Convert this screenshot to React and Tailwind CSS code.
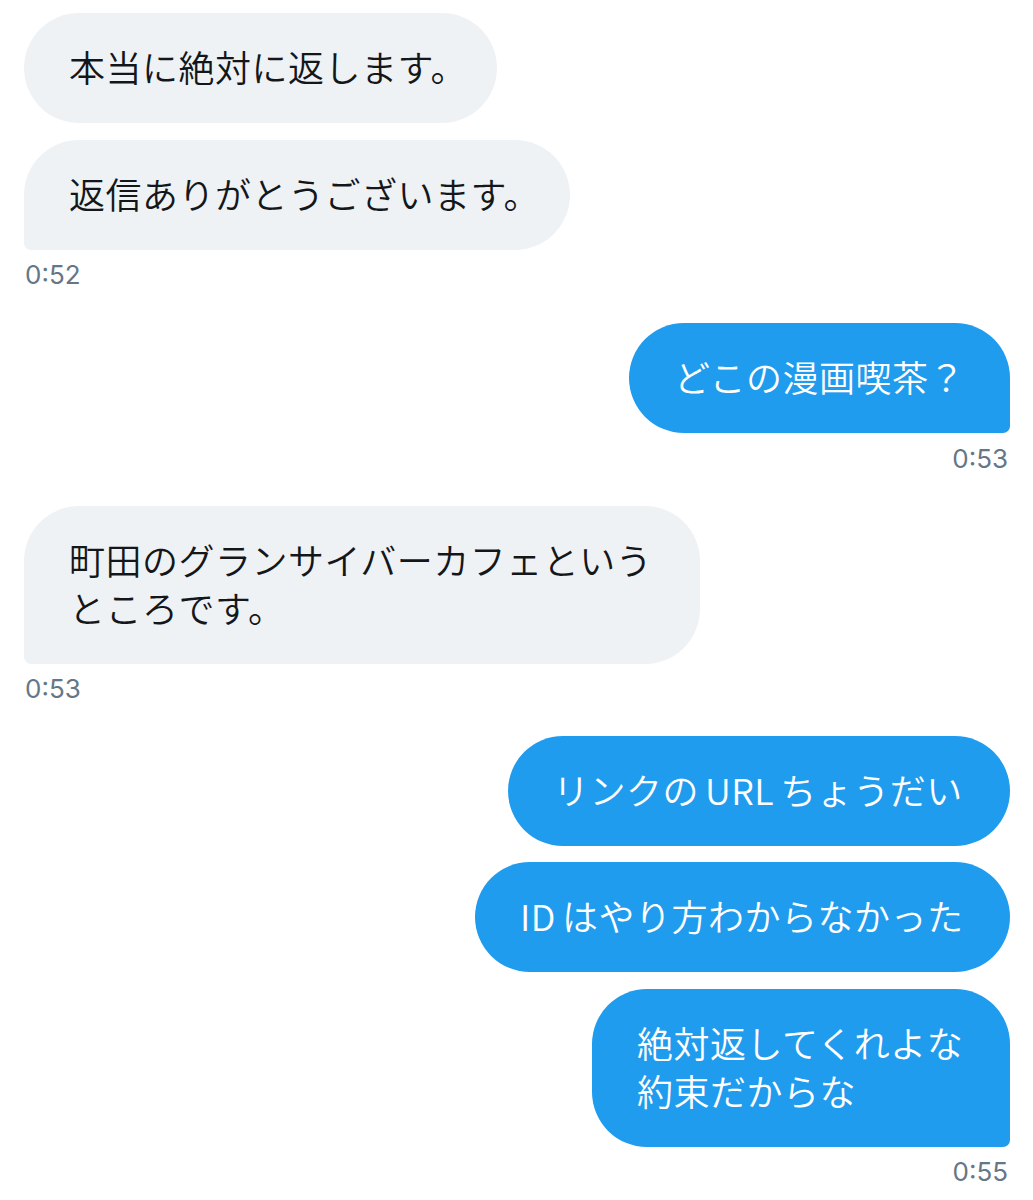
import React from "react";

const jp = { fontFamily: '"Noto Sans CJK JP", "Noto Sans", sans-serif' };
const ts = { fontFamily: 'Inter, "Liberation Sans", sans-serif' };

function Bubble({ side, width, tail, lines, className = "" }) {
  const base =
    side === "left"
      ? "self-start bg-[#eff2f5] text-[#14171a]"
      : "self-end bg-[#209cee] text-white";
  const corner = tail
    ? side === "left"
      ? "rounded-tl-[55px] rounded-tr-[55px] rounded-br-[55px] rounded-bl-[7px]"
      : "rounded-tl-[55px] rounded-tr-[55px] rounded-bl-[55px] rounded-br-[7px]"
    : "rounded-[55px]";
  return (
    <div
      className={`${base} ${corner} ${className} pt-[29px] pb-[33px] pl-[45px] text-[36px] leading-[48px] tracking-[0.5px] font-[350] whitespace-nowrap`}
      style={{ ...jp, width }}
    >
      {lines.map((l, i) => (
        <div key={i}>{l}</div>
      ))}
    </div>
  );
}

function Time({ side, children, className = "" }) {
  return (
    <div
      className={`${side === "left" ? "self-start pl-[1px]" : "self-end pr-[2px]"} ${className} text-[26px] leading-[32px] text-[#657786]`}
      style={ts}
    >
      {children}
    </div>
  );
}

export default function App() {
  return (
    <div className="w-[1033px] h-[1200px] bg-white overflow-hidden">
      <div className="flex flex-col pl-[24px] pr-[23px] pt-[13px]">
        <Bubble side="left" width={473} lines={["本当に絶対に返します。"]} />
        <Bubble
          side="left"
          width={546}
          tail
          className="mt-[17px]"
          lines={["返信ありがとうございます。"]}
        />
        <Time side="left" className="mt-[9px]">0:52</Time>

        <Bubble
          side="right"
          width={381}
          tail
          className="mt-[32px]"
          lines={["どこの漫画喫茶？"]}
        />
        <Time side="right" className="mt-[10px]">0:53</Time>

        <Bubble
          side="left"
          width={676}
          tail
          className="mt-[31px]"
          lines={["町田のグランサイバーカフェという", "ところです。"]}
        />
        <Time side="left" className="mt-[9px]">0:53</Time>

        <Bubble
          side="right"
          width={502}
          className="mt-[31px]"
          lines={[
            <>
              リンクの<span className="mx-[6px]">URL</span>ちょうだい
            </>,
          ]}
        />
        <Bubble
          side="right"
          width={535}
          className="mt-[16px]"
          lines={[
            <>
              <span className="mr-[6px]">ID</span>はやり方わからなかった
            </>,
          ]}
        />
        <Bubble
          side="right"
          width={418}
          tail
          className="mt-[17px]"
          lines={["絶対返してくれよな", "約束だからな"]}
        />
        <Time side="right" className="mt-[9px]">0:55</Time>
      </div>
    </div>
  );
}
